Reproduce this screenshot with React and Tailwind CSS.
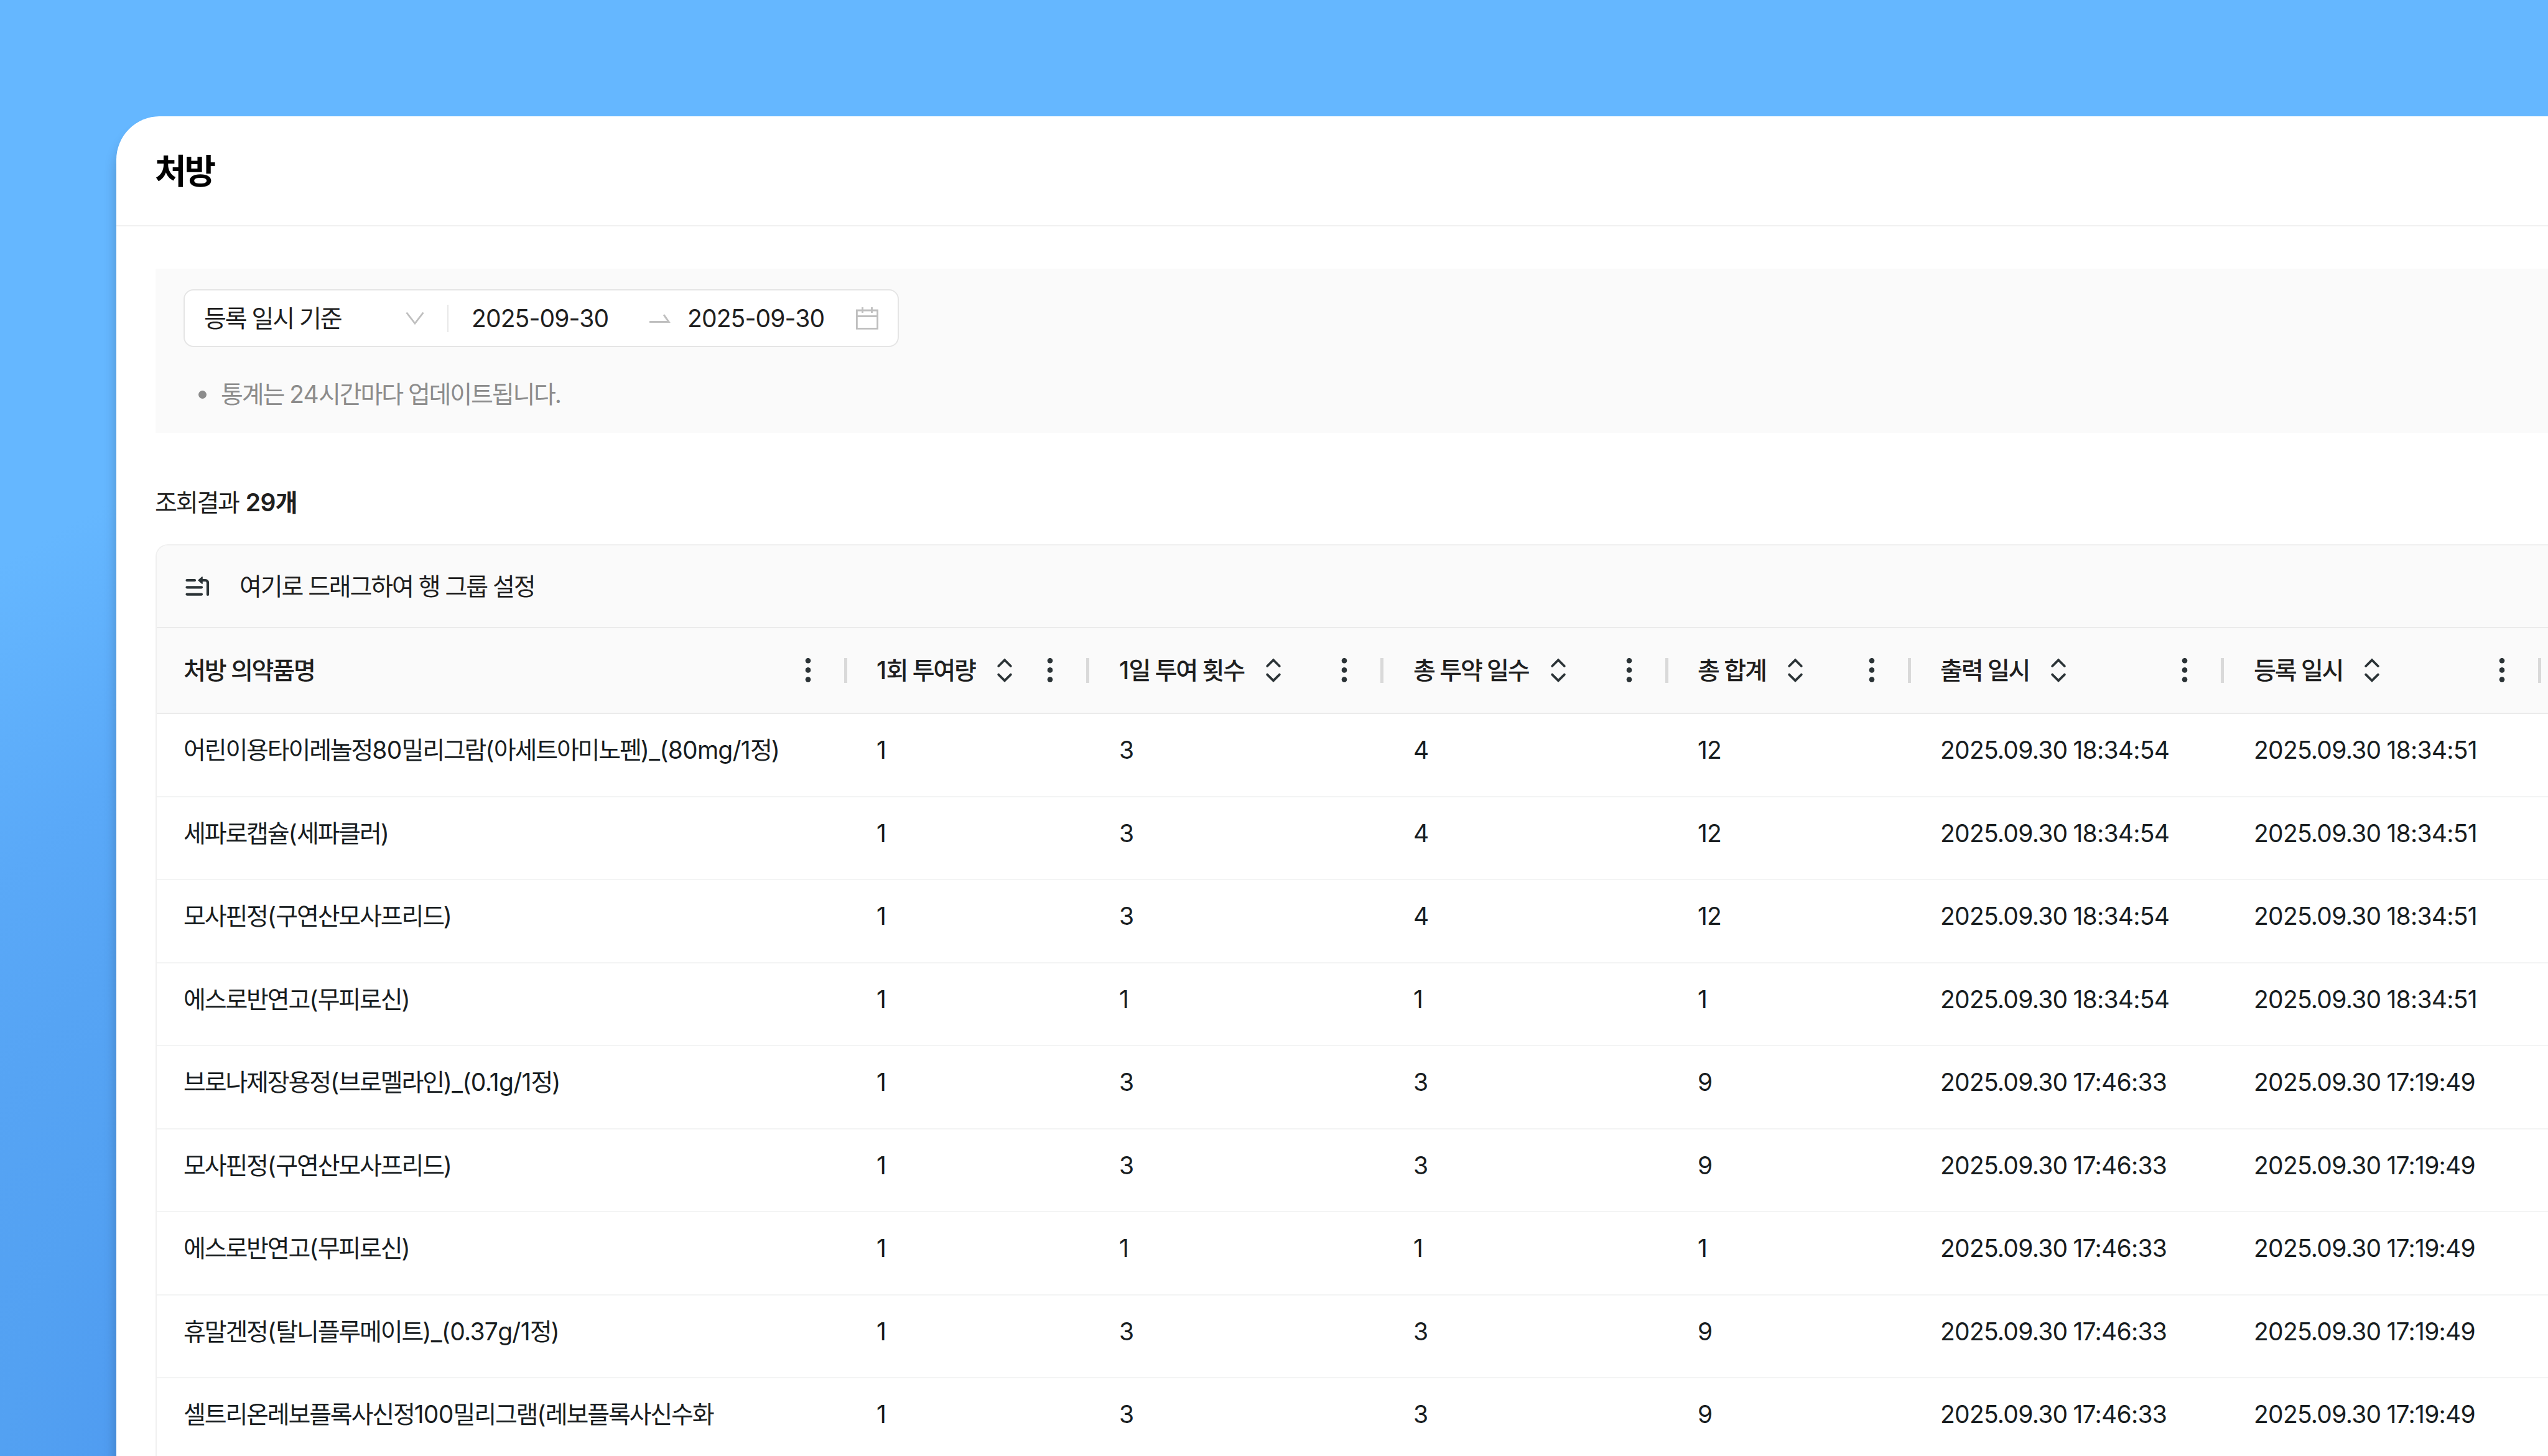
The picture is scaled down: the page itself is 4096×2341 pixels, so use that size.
import React from 'react';

const columns = [
  { label: '처방 의약품명', sortable: false, width: 'w-[1110px] pl-[43px]' },
  { label: '1회 투여량', sortable: true, width: 'w-[389px] pl-[47px]' },
  { label: '1일 투여 횟수', sortable: true, width: 'w-[473px] pl-[48px]' },
  { label: '총 투약 일수', sortable: true, width: 'w-[458px] pl-[48px]' },
  { label: '총 합계', sortable: true, width: 'w-[390px] pl-[47px]' },
  { label: '출력 일시', sortable: true, width: 'w-[503px] pl-[47px]' },
  { label: '등록 일시', sortable: true, width: 'w-[510px] pl-[48px]' },
];

const rows = [
  ['어린이용타이레놀정80밀리그람(아세트아미노펜)_(80mg/1정)', '1', '3', '4', '12', '2025.09.30 18:34:54', '2025.09.30 18:34:51'],
  ['세파로캡슐(세파클러)', '1', '3', '4', '12', '2025.09.30 18:34:54', '2025.09.30 18:34:51'],
  ['모사핀정(구연산모사프리드)', '1', '3', '4', '12', '2025.09.30 18:34:54', '2025.09.30 18:34:51'],
  ['에스로반연고(무피로신)', '1', '1', '1', '1', '2025.09.30 18:34:54', '2025.09.30 18:34:51'],
  ['브로나제장용정(브로멜라인)_(0.1g/1정)', '1', '3', '3', '9', '2025.09.30 17:46:33', '2025.09.30 17:19:49'],
  ['모사핀정(구연산모사프리드)', '1', '3', '3', '9', '2025.09.30 17:46:33', '2025.09.30 17:19:49'],
  ['에스로반연고(무피로신)', '1', '1', '1', '1', '2025.09.30 17:46:33', '2025.09.30 17:19:49'],
  ['휴말겐정(탈니플루메이트)_(0.37g/1정)', '1', '3', '3', '9', '2025.09.30 17:46:33', '2025.09.30 17:19:49'],
  ['셀트리온레보플록사신정100밀리그램(레보플록사신수화', '1', '3', '3', '9', '2025.09.30 17:46:33', '2025.09.30 17:19:49'],
];

// Hangul is set tighter than the digits and Latin around it
function Text({ children }) {
  return children.split(/([가-힣]+)/).map((part, i) =>
    i % 2 ? <span key={i} className="tracking-[-0.056em]">{part}</span> : part
  );
}

function SortIcon() {
  return (
    <svg className="ml-[34px] h-[40px] w-[26px] shrink-0" viewBox="0 0 26 40" fill="none" stroke="#2b3336" strokeWidth="3.8" strokeLinecap="round">
      <path d="M3.2 13 13 3.2 22.8 13M3.2 26.6 13 36.4 22.8 26.6" />
    </svg>
  );
}

function MenuIcon() {
  return (
    <svg className="h-[40px] w-[10px] shrink-0" viewBox="0 0 10 40" fill="#2b3336">
      <circle cx="5" cy="4.2" r="4.3" />
      <circle cx="5" cy="19.4" r="4.3" />
      <circle cx="5" cy="34.6" r="4.3" />
    </svg>
  );
}

function RowGroupIcon() {
  return (
    <svg className="h-[32px] w-[39px]" viewBox="0 0 39 32" fill="none" stroke="#2b3336" strokeWidth="4.2" strokeLinecap="round">
      <path d="M2.5 6H15M2.5 17.3H26M2.5 28.6H26" />
      <path d="M26 6H32Q36 6 36 10.5V29" />
      <path d="M21 6 27 0.8V11.2Z" fill="#2b3336" strokeWidth="1.6" strokeLinejoin="round" />
    </svg>
  );
}

function FilterBox() {
  return (
    <section className="ml-[63px] mt-[68px] h-[264px] bg-[#fafafa] pl-[45px] pt-[33px]">
      <div className="flex h-[93px] w-[1150px] items-center rounded-[16px] border-2 border-[#e5e5e5] bg-white pl-[31px]">
        <span className="w-[324px]"><Text>등록 일시 기준</Text></span>
        <svg className="h-[22px] w-[30px]" viewBox="0 0 30 22" fill="none" stroke="#bfbfbf" strokeWidth="2.8">
          <path d="M1.5 1.5 15 19 28.5 1.5" />
        </svg>
        <span className="ml-[37px] mr-[37px] h-[44px] w-[2px] bg-[#e8e8e8]" />
        <span className="w-[286px] tracking-[-0.022em]">2025-09-30</span>
        <svg className="h-[16px] w-[34px]" viewBox="0 0 34 16" fill="none" stroke="#bfbfbf" strokeWidth="3">
          <path d="M0 13.5H31L23 2" />
        </svg>
        <span className="ml-[27px] w-[271px] tracking-[-0.022em]">2025-09-30</span>
        <svg className="h-[36px] w-[36px]" viewBox="0 0 36 36" fill="none" stroke="#bfbfbf" strokeWidth="2.8">
          <path d="M1.4 5H34.6V34.4H1.4ZM1.4 14.5H34.6M10.5 0V9M25.5 0V9" />
        </svg>
      </div>
      <div className="mt-[46px] flex items-center text-[#8c8c8c]">
        <span className="ml-[24px] mr-[23px] h-[13px] w-[13px] rounded-full bg-[#8c8c8c]" />
        <p><Text>통계는 24시간마다 업데이트됩니다.</Text></p>
      </div>
    </section>
  );
}

function Table() {
  return (
    <section className="ml-[63px] mt-[37px] w-[4200px] overflow-hidden rounded-tl-[20px] border-l-2 border-t-2 border-[#f0f0f0]">
      <div className="flex h-[133px] items-center border-b-2 border-[#ebebeb] bg-[#fafafa] pl-[46px]">
        <RowGroupIcon />
        <span className="ml-[48px]"><Text>여기로 드래그하여 행 그룹 설정</Text></span>
      </div>
      <div className="flex h-[138px] border-b-2 border-[#ebebeb] bg-[#fafafa]">
        {columns.map((col) => (
          <div key={col.label} className={`${col.width} flex shrink-0 items-center`}>
            <span className="whitespace-nowrap font-medium"><Text>{col.label}</Text></span>
            {col.sortable && <SortIcon />}
            <span className="ml-auto mr-[53px] flex"><MenuIcon /></span>
            <span className="h-[40px] w-[5px] bg-[#d9d9d9]" />
          </div>
        ))}
      </div>
      {rows.map((row, i) => (
        <div key={i} className="flex h-[133.5px] border-b-[2.5px] border-[#f3f4f4] pt-[28px] text-[#181d1f]">
          {row.map((cell, j) => (
            <div key={j} className={`${columns[j].width} shrink-0 whitespace-nowrap`}>
              <Text>{cell}</Text>
            </div>
          ))}
        </div>
      ))}
    </section>
  );
}

export default function App() {
  return (
    <div className="h-[2341px] w-[4096px] overflow-hidden bg-[radial-gradient(circle_at_1060px_2500px,#4f9bf0_850px,#53a1f2_1070px,#56a4f4_1290px,#5aa9f8_1520px,#65b7ff_1910px)] pl-[187px] pt-[187px] font-['Inter','Noto_Sans_CJK_KR',sans-serif] text-[39px] leading-[60px] tracking-[-0.019em] text-[#1f1f1f] [word-spacing:-0.03em]">
      <div className="h-[2154px] overflow-hidden rounded-tl-[70px] bg-white shadow-[0_20px_20px_rgba(0,0,0,0.22)]">
        <header className="flex h-[177px] items-center border-b-[2.5px] border-[#f0f0f0] pl-[62px] text-[55px] font-semibold text-black">
          <h1><Text>처방</Text></h1>
        </header>
        <FilterBox />
        <div className="ml-[62px] mt-[82px]">
          <Text>조회결과</Text> <b className="ml-[2px] font-semibold"><Text>29개</Text></b>
        </div>
        <Table />
      </div>
    </div>
  );
}
